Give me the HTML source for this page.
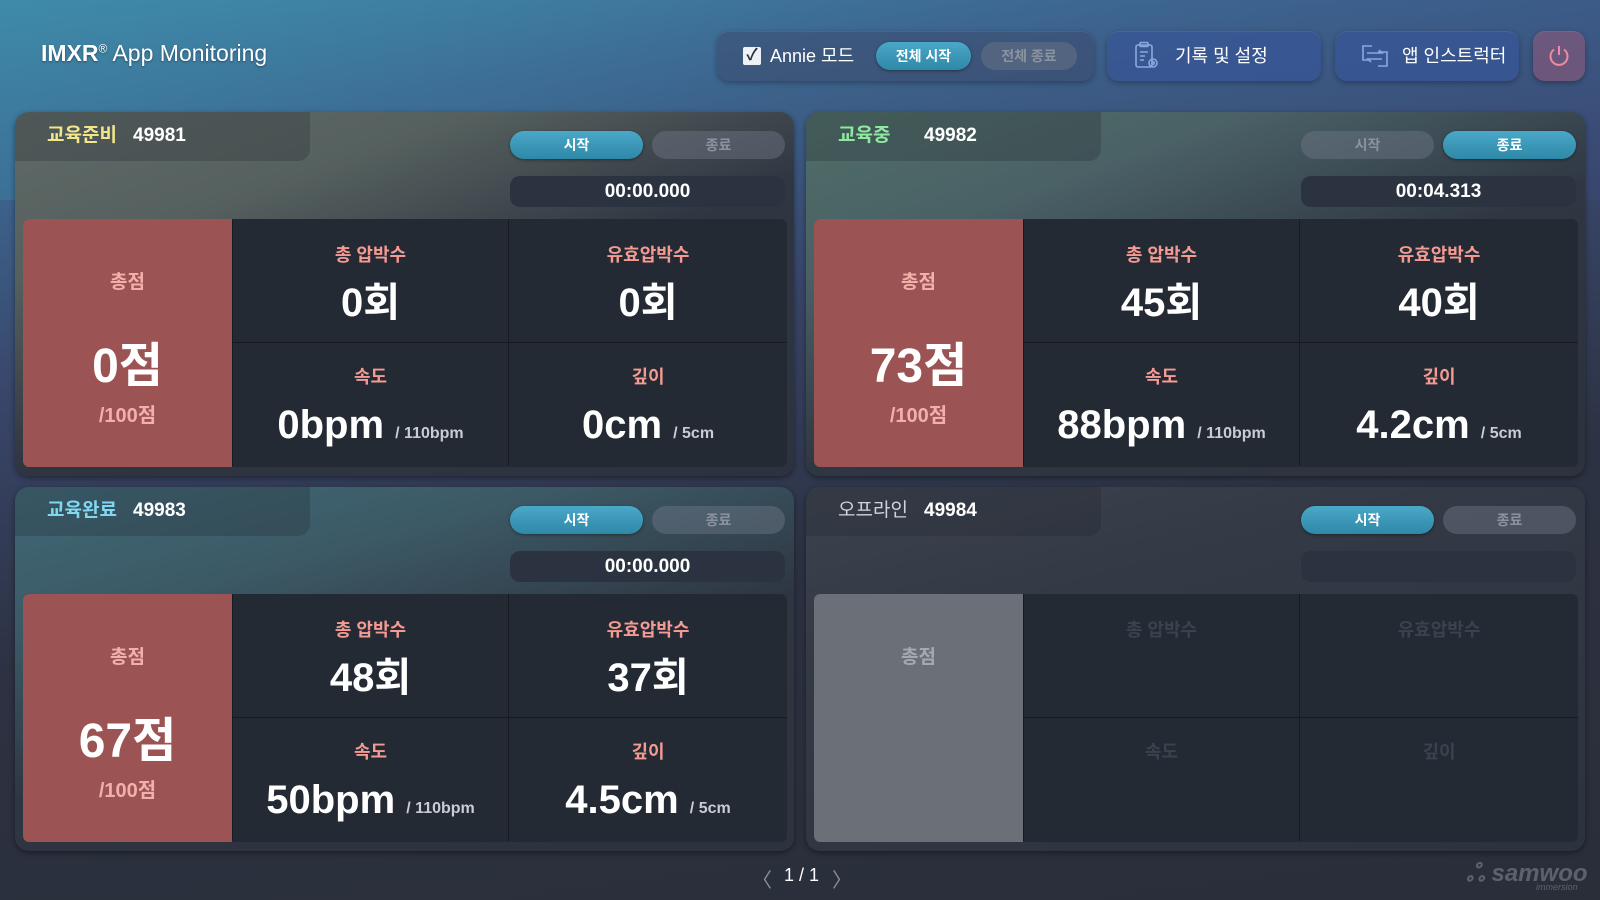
<!DOCTYPE html>
<html><head><meta charset="utf-8"><style>
*{box-sizing:border-box;margin:0;padding:0}
body{width:1600px;height:900px;overflow:hidden;font-family:"Liberation Sans","Noto Sans CJK KR",sans-serif;color:#fff;
background:linear-gradient(172deg,#3f8aa9 0%,#3d6892 14%,#39466a 35%,#2c3242 60%,#2a2e39 100%);position:relative}
.bg2{position:absolute;inset:0;background:linear-gradient(90deg,rgba(60,140,170,.35),rgba(60,80,130,0) 50%,rgba(60,80,140,.2));height:200px}
.title{position:absolute;left:41px;top:40px;font-size:23px;text-shadow:0 1px 2px rgba(0,0,0,.4)}
.title b{font-weight:700}
.grp{position:absolute;top:31px;height:50px;border-radius:12px;background:rgba(60,75,110,.55);box-shadow:0 2px 6px rgba(0,0,0,.3),inset 0 1px 0 rgba(255,255,255,.08)}
.pill{position:absolute;border-radius:15px;font-size:14px;font-weight:700;text-align:center}
.on{background:linear-gradient(#4aa8c8,#2f88a8);color:#fff;box-shadow:0 1px 3px rgba(0,0,0,.4)}
.off{background:rgba(110,120,135,.45);color:#8b93a0}
.blue{background:rgba(55,85,150,.75)}
.panel{position:absolute;width:779px;height:364px;border-radius:14px;background:#2c323e;box-shadow:0 2px 6px rgba(0,0,0,.4);overflow:hidden}
.tab{position:absolute;left:0;top:0;width:295px;height:49px;border-bottom-right-radius:12px;background:rgba(30,35,45,.25)}
.st{position:absolute;left:32px;top:13px;font-size:19px;font-weight:700;line-height:22px}
.num{position:absolute;left:118px;top:13px;font-size:19px;font-weight:700;line-height:22px}
.timer{position:absolute;left:495px;top:64px;width:275px;height:31px;border-radius:10px;background:#2c3340;font-size:19px;font-weight:700;text-align:center;line-height:31px}
.grid{position:absolute;left:8px;top:107px;width:764px;height:248px;border-radius:6px;background:#242a34;overflow:hidden}
.score{position:absolute;left:0;top:0;width:209px;height:248px;background:#9b5353}
.cell{position:absolute;width:276px;height:124px;border-left:1px solid #161b22;border-top:1px solid #161b22}
.lab{position:absolute;left:0;right:0;text-align:center;font-size:18px;font-weight:700;color:#f39a92;line-height:22px}
.val{position:absolute;left:0;right:0;text-align:center;font-size:40px;font-weight:700;line-height:46px}
.val small{font-size:16px;color:#c8ccd4;font-weight:700}
</style></head><body>
<div class="bg2"></div>
<div class="title"><b>IMXR</b><sup style="font-size:12px">®</sup> App Monitoring</div>
<div class="grp" style="left:717px;width:377px">
 <div style="position:absolute;left:26px;top:16px;width:18px;height:18px;background:#eef2f6;border-radius:2px;color:#234;font-size:16px;line-height:18px;text-align:center;font-weight:700">✓</div>
 <div style="position:absolute;left:53px;top:13px;font-size:18px;line-height:24px">Annie 모드</div>
 <div class="pill on" style="left:159px;top:11px;width:95px;height:28px;line-height:28px">전체 시작</div>
 <div class="pill off" style="left:264px;top:11px;width:96px;height:28px;line-height:28px">전체 종료</div>
</div>
<div class="grp blue" style="left:1107px;width:214px">
 <svg style="position:absolute;left:26px;top:10px" width="28" height="30" viewBox="0 0 28 30" fill="none" stroke="#8aa8e0" stroke-width="1.6"><rect x="3" y="4" width="16" height="22" rx="2"/><rect x="7" y="1.5" width="8" height="4" rx="1"/><path d="M7 11h8M7 15h5M7 19h4"/><circle cx="20" cy="22" r="4"/><circle cx="20" cy="22" r="1.3"/></svg>
 <div style="position:absolute;left:68px;top:13px;font-size:18px;line-height:24px">기록 및 설정</div>
</div>
<div class="grp blue" style="left:1335px;width:184px">
 <svg style="position:absolute;left:25px;top:11px" width="30" height="28" viewBox="0 0 30 28" fill="none" stroke="#8aa8e0" stroke-width="1.6"><path d="M12 4H3v14h6M18 10h9v14h-9"/><path d="M7 11h15l-3-3M22 17H8l3 3"/></svg>
 <div style="position:absolute;left:67px;top:13px;font-size:18px;line-height:24px">앱 인스트럭터</div>
</div>
<div class="grp" style="left:1533px;width:52px;background:rgba(150,90,120,.55)">
 <svg style="position:absolute;left:14px;top:13px" width="24" height="24" viewBox="0 0 24 24" fill="none" stroke="#f08aa0" stroke-width="2"><path d="M7 5.5a8.5 8.5 0 1 0 10 0"/><path d="M12 2v9"/></svg>
</div>

<!-- Panel 1 -->
<div class="panel" style="left:15px;top:112px;background:linear-gradient(160deg,#5f6a67 0%,#56615f 25%,#2f3541 55%,#2c323e 100%)">
 <div class="tab"></div>
 <div class="st" style="color:#f2e58a">교육준비</div><div class="num">49981</div>
 <div class="pill on" style="left:495px;top:19px;width:133px;height:28px;line-height:28px">시작</div>
 <div class="pill off" style="left:637px;top:19px;width:133px;height:28px;line-height:28px">종료</div>
 <div class="timer">00:00.000</div>
 <div class="grid">
  <div class="score"><div class="lab" style="top:53px;font-size:19px;color:#f2b0aa">총점</div><div class="val" style="top:120px;font-size:48px;line-height:56px">0점</div><div class="lab" style="top:186px;font-size:20px;color:#f2b0aa">/100점</div></div>
  <div class="cell" style="left:209px;top:-1px"><div class="lab" style="top:25px">총 압박수</div><div class="val" style="top:61px">0회</div></div>
  <div class="cell" style="left:485px;top:-1px;width:279px"><div class="lab" style="top:25px">유효압박수</div><div class="val" style="top:61px">0회</div></div>
  <div class="cell" style="left:209px;top:123px"><div class="lab" style="top:23px">속도</div><div class="val" style="top:59px">0bpm <small>/ 110bpm</small></div></div>
  <div class="cell" style="left:485px;top:123px;width:279px"><div class="lab" style="top:23px">깊이</div><div class="val" style="top:59px">0cm <small>/ 5cm</small></div></div>
 </div>
</div>

<!-- Panel 2 -->
<div class="panel" style="left:806px;top:112px;background:linear-gradient(160deg,#4f6e67 0%,#4a6166 25%,#2f3743 55%,#2c323e 100%)">
 <div class="tab"></div>
 <div class="st" style="color:#8fe8a0">교육중</div><div class="num">49982</div>
 <div class="pill off" style="left:495px;top:19px;width:133px;height:28px;line-height:28px">시작</div>
 <div class="pill on" style="left:637px;top:19px;width:133px;height:28px;line-height:28px">종료</div>
 <div class="timer">00:04.313</div>
 <div class="grid">
  <div class="score"><div class="lab" style="top:53px;font-size:19px;color:#f2b0aa">총점</div><div class="val" style="top:120px;font-size:48px;line-height:56px">73점</div><div class="lab" style="top:186px;font-size:20px;color:#f2b0aa">/100점</div></div>
  <div class="cell" style="left:209px;top:-1px"><div class="lab" style="top:25px">총 압박수</div><div class="val" style="top:61px">45회</div></div>
  <div class="cell" style="left:485px;top:-1px;width:279px"><div class="lab" style="top:25px">유효압박수</div><div class="val" style="top:61px">40회</div></div>
  <div class="cell" style="left:209px;top:123px"><div class="lab" style="top:23px">속도</div><div class="val" style="top:59px">88bpm <small>/ 110bpm</small></div></div>
  <div class="cell" style="left:485px;top:123px;width:279px"><div class="lab" style="top:23px">깊이</div><div class="val" style="top:59px">4.2cm <small>/ 5cm</small></div></div>
 </div>
</div>

<!-- Panel 3 -->
<div class="panel" style="left:15px;top:487px;background:linear-gradient(165deg,#3f6876 0%,#3c5a66 25%,#2e3642 55%,#2c323e 100%)">
 <div class="tab"></div>
 <div class="st" style="color:#7fd8f0">교육완료</div><div class="num">49983</div>
 <div class="pill on" style="left:495px;top:19px;width:133px;height:28px;line-height:28px">시작</div>
 <div class="pill off" style="left:637px;top:19px;width:133px;height:28px;line-height:28px">종료</div>
 <div class="timer">00:00.000</div>
 <div class="grid">
  <div class="score"><div class="lab" style="top:53px;font-size:19px;color:#f2b0aa">총점</div><div class="val" style="top:120px;font-size:48px;line-height:56px">67점</div><div class="lab" style="top:186px;font-size:20px;color:#f2b0aa">/100점</div></div>
  <div class="cell" style="left:209px;top:-1px"><div class="lab" style="top:25px">총 압박수</div><div class="val" style="top:61px">48회</div></div>
  <div class="cell" style="left:485px;top:-1px;width:279px"><div class="lab" style="top:25px">유효압박수</div><div class="val" style="top:61px">37회</div></div>
  <div class="cell" style="left:209px;top:123px"><div class="lab" style="top:23px">속도</div><div class="val" style="top:59px">50bpm <small>/ 110bpm</small></div></div>
  <div class="cell" style="left:485px;top:123px;width:279px"><div class="lab" style="top:23px">깊이</div><div class="val" style="top:59px">4.5cm <small>/ 5cm</small></div></div>
 </div>
</div>

<!-- Panel 4 -->
<div class="panel" style="left:806px;top:487px;background:linear-gradient(165deg,#3c424e 0%,#333a46 30%,#2c323e 100%)">
 <div class="tab"></div>
 <div class="st" style="color:#d0d4da;font-weight:400">오프라인</div><div class="num">49984</div>
 <div class="pill on" style="left:495px;top:19px;width:133px;height:28px;line-height:28px">시작</div>
 <div class="pill off" style="left:637px;top:19px;width:133px;height:28px;line-height:28px">종료</div>
 <div class="timer"></div>
 <div class="grid">
  <div class="score" style="background:#6b7078"><div class="lab" style="top:53px;font-size:19px;color:#a4a9b0">총점</div></div>
  <div class="cell" style="left:209px;top:-1px"><div class="lab" style="top:25px;color:#3b424e">총 압박수</div></div>
  <div class="cell" style="left:485px;top:-1px;width:279px"><div class="lab" style="top:25px;color:#3b424e">유효압박수</div></div>
  <div class="cell" style="left:209px;top:123px"><div class="lab" style="top:23px;color:#3b424e">속도</div></div>
  <div class="cell" style="left:485px;top:123px;width:279px"><div class="lab" style="top:23px;color:#3b424e">깊이</div></div>
 </div>
</div>

<div style="position:absolute;left:752px;top:864px;font-size:20px;color:#8a909a">〈</div>
<div style="position:absolute;left:784px;top:865px;font-size:18px">1 / 1</div>
<div style="position:absolute;left:832px;top:864px;font-size:20px;color:#8a909a">〉</div>
<div style="position:absolute;left:1466px;top:860px;font-size:24px;font-style:italic;color:#5c626c;font-weight:700">ஃ samwoo</div>
<div style="position:absolute;left:1536px;top:882px;font-size:9px;font-style:italic;color:#5c626c">immersion</div>
</body></html>
